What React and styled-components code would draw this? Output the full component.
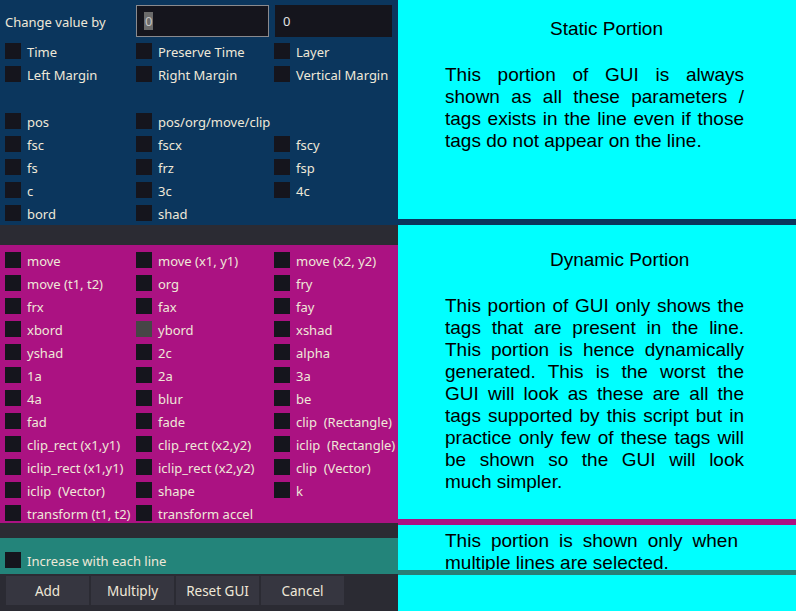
import styled, { createGlobalStyle } from "styled-components";

const Global = createGlobalStyle`
  html, body { margin: 0; padding: 0; background: #2b2b33; }
  body { width: 796px; height: 611px; overflow: hidden; }
`;

const Screen = styled.div`
  display: flex;
  width: 796px;
  height: 611px;
`;

/* left side - the dialog */
const Dialog = styled.div`
  width: 398px;
  height: 611px;
  display: flex;
  flex-direction: column;
  background: #2b2b33;
  font-family: "Noto Sans", "Open Sans", sans-serif;
  font-size: 13px;
  color: #efe8d8;
`;

const Section = styled.div`
  background: ${(p) => p.$bg};
  height: ${(p) => p.$h}px;
  margin-bottom: ${(p) => p.$gap || 0}px;
  padding: ${(p) => p.$pad || "0"};
  box-sizing: border-box;
  display: flex;
  flex-direction: column;
`;

const Header = styled.div`
  display: flex;
  align-items: center;
  height: 32px;
  margin: 5px 0 6px 5px;
`;

const HeaderLabel = styled.div`
  width: 131px;
  padding-top: 2px;
`;

const Field = styled.div`
  width: ${(p) => p.$w}px;
  height: 32px;
  box-sizing: border-box;
  background: #15151d;
  border: 1px solid ${(p) => (p.$focus ? "#8a8a8e" : "#15151d")};
  margin-right: 6px;
  display: flex;
  align-items: center;
  padding-left: 7px;
  color: #e3e3e3;
`;

const Selected = styled.span`
  background: #6b6b6b;
  color: #c4c4c4;
  line-height: 18px;
  padding: 0 1px;
`;

const Grid = styled.div`
  display: grid;
  grid-template-columns: 131px 138px 1fr;
  grid-auto-rows: 16px;
  row-gap: 7px;
  padding-left: 5px;
  margin-bottom: ${(p) => p.$mb || 0}px;
`;

const Item = styled.label`
  display: flex;
  align-items: center;
  gap: 6px;
  height: 16px;
  line-height: 16px;
  white-space: pre;
`;

const ItemText = styled.span`
  padding-top: 2px;
`;

const Box = styled.span`
  flex: none;
  width: 16px;
  height: 16px;
  background: ${(p) => (p.$hover ? "#464646" : "#15151d")};
`;

const Buttons = styled.div`
  display: flex;
  gap: 2px;
  padding: 2px 0 0 6px;
`;

const Button = styled.button`
  width: 83px;
  height: 29px;
  border: none;
  background: #363640;
  color: #efe8d8;
  font-family: "Noto Sans", "Open Sans", sans-serif;
  font-size: 13.5px;
  padding: 1px 0 0;
`;

/* right side - the annotation picture */
const Notes = styled.div`
  width: 398px;
  height: 611px;
  display: flex;
  flex-direction: column;
  background: #00ffff;
  font-family: "Liberation Sans", Arial, sans-serif;
  font-size: 19px;
  line-height: 22px;
  color: #000;
`;

const Panel = styled.div`
  height: ${(p) => p.$h}px;
  padding: ${(p) => p.$top}px 0 0 47px;
  box-sizing: border-box;
`;

const Stripe = styled.div`
  height: ${(p) => p.$h}px;
  background: ${(p) => p.$bg};
  position: relative;
`;

const Title = styled.div`
  padding-left: 105px;
  margin-bottom: 24px;
`;

const Line = styled.div`
  width: ${(p) => p.$w || 299}px;
  white-space: nowrap;
  text-align: ${(p) => (p.$last ? "left" : "justify")};
  text-align-last: ${(p) => (p.$last ? "left" : "justify")};
`;

const Check = ({ label, hover }) => (
  <Item>
    <Box $hover={hover} />
    <ItemText>{label}</ItemText>
  </Item>
);

const group1 = ["Time", "Preserve Time", "Layer", "Left Margin", "Right Margin", "Vertical Margin"];
const group2 = ["pos", "pos/org/move/clip", "", "fsc", "fscx", "fscy", "fs", "frz", "fsp", "c", "3c", "4c", "bord", "shad", ""];
const dynamicTags = [
  "move", "move (x1, y1)", "move (x2, y2)",
  "move (t1, t2)", "org", "fry",
  "frx", "fax", "fay",
  "xbord", "ybord", "xshad",
  "yshad", "2c", "alpha",
  "1a", "2a", "3a",
  "4a", "blur", "be",
  "fad", "fade", "clip  (Rectangle)",
  "clip_rect (x1,y1)", "clip_rect (x2,y2)", "iclip  (Rectangle)",
  "iclip_rect (x1,y1)", "iclip_rect (x2,y2)", "clip  (Vector)",
  "iclip  (Vector)", "shape", "k",
  "transform (t1, t2)", "transform accel", "",
];

const staticLines = [
  "This portion of GUI is always",
  "shown as all these parameters /",
  "tags exists in the line even if those",
  "tags do not appear on the line.",
];

const dynamicLines = [
  "This portion of GUI only shows the",
  "tags that are present in the line.",
  "This portion is hence dynamically",
  "generated. This is the worst the",
  "GUI will look as these are all the",
  "tags supported by this script but in",
  "practice only few of these tags will",
  "be shown so the GUI will look",
  "much simpler.",
];

const renderGrid = (tags) =>
  tags.map((t, i) => (t ? <Check key={i} label={t} hover={t === "ybord"} /> : <span key={i} />));

const renderLines = (lines, w) =>
  lines.map((l, i) => (
    <Line key={i} $w={w} $last={i === lines.length - 1}>
      {l}
    </Line>
  ));

export default function App() {
  return (
    <>
      <Global />
      <Screen>
        <Dialog>
          {/* Static portion */}
          <Section $bg="#0b365d" $h={225} $gap={20}>
            <Header>
              <HeaderLabel>Change value by</HeaderLabel>
              <Field $w={133} $focus>
                <Selected>0</Selected>
              </Field>
              <Field $w={117}>0</Field>
            </Header>
            <Grid $mb={31}>{renderGrid(group1)}</Grid>
            <Grid>{renderGrid(group2)}</Grid>
          </Section>

          {/* Dynamic portion */}
          <Section $bg="#ab1282" $h={278} $gap={15} $pad="7px 0 0 0">
            <Grid>{renderGrid(dynamicTags)}</Grid>
          </Section>

          {/* Multiple lines */}
          <Section $bg="#23847a" $h={36} $pad="14px 0 0 0">
            <Grid>
              <Check label="Increase with each line" />
            </Grid>
          </Section>

          <Buttons>
            <Button>Add</Button>
            <Button>Multiply</Button>
            <Button>Reset GUI</Button>
            <Button>Cancel</Button>
          </Buttons>
        </Dialog>

        <Notes>
          <Panel $h={219} $top={18}>
            <Title>Static Portion</Title>
            {renderLines(staticLines)}
          </Panel>
          <Stripe $h={6} $bg="#0b365d" />
          <Panel $h={294} $top={24}>
            <Title>Dynamic Portion</Title>
            {renderLines(dynamicLines)}
          </Panel>
          <Stripe $h={6} $bg="#ab1282" />
          <Panel $h={45} $top={5}>
            {renderLines(["This portion is shown only when", "multiple lines are selected."], 293)}
          </Panel>
          <Stripe $h={5} $bg="#2a7f78" />
        </Notes>
      </Screen>
    </>
  );
}
